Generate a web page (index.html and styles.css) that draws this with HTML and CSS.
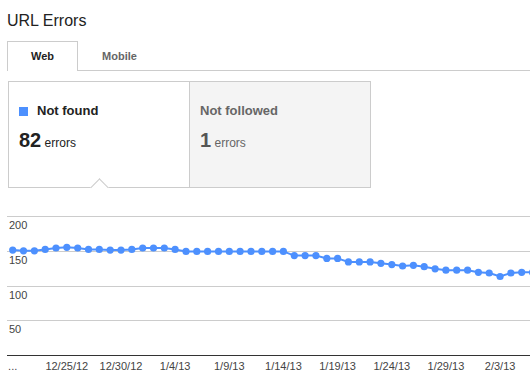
FILE: index.html
```html
<!DOCTYPE html>
<html>
	<head>
		<title>URL Errors</title>
		<link rel="stylesheet" href="styles.css">
	</head>
	<body>
		<div class="page">
			<h1 class="title">URL Errors</h1>

			<div class="tabs">
				<div class="tab active">Web</div>
				<div class="tab">Mobile</div>
			</div>

			<div class="cards">
				<div class="card selected">
					<div class="card-label"><span class="swatch"></span>Not found</div>
					<div class="card-count"><span class="num">82</span> errors</div>
				</div>
				<div class="card off">
					<div class="card-label">Not followed</div>
					<div class="card-count"><span class="num">1</span> errors</div>
				</div>
			</div>

			<svg class="chart" id="chart" width="523" height="177" viewBox="7 200 523 177">
				<g class="grid">
					<line x1="7" y1="216.5" x2="530" y2="216.5"></line>
					<line x1="7" y1="251.5" x2="530" y2="251.5"></line>
					<line x1="7" y1="286.5" x2="530" y2="286.5"></line>
					<line x1="7" y1="320.5" x2="530" y2="320.5"></line>
				</g>
				<line class="axis" x1="7" y1="355.5" x2="530" y2="355.5"></line>
				<g class="ylabels">
					<text x="9" y="229">200</text>
					<text x="9" y="264">150</text>
					<text x="9" y="299">100</text>
					<text x="9" y="333">50</text>
				</g>
				<g class="xlabels" id="xlabels"></g>
				<polyline class="series" id="series" points=""></polyline>
				<g class="dots" id="dots"></g>
			</svg>
		</div>

	<script>
		const values = [151, 150, 150, 152, 154, 155, 154, 152, 152, 151, 151, 152, 154, 154, 154, 152,
			149, 149, 149, 149, 149, 149, 149, 149, 149, 149,
			143, 143, 143, 139, 139, 134, 134, 134, 132, 130, 128, 129, 127, 124,
			122, 122, 122, 119, 118, 113, 118, 119, 119];
		const labels = ["...", "12/25/12", "12/30/12", "1/4/13", "1/9/13", "1/14/13", "1/19/13", "1/24/13", "1/29/13", "2/3/13"];

		const svgNS = "http://www.w3.org/2000/svg";
		const startX = 12.7;
		const step = 10.83;
		const baseY = 355;
		const scale = 0.695;

		function px(i) {
			return startX + i * step;
		}
		function py(v) {
			return baseY - v * scale;
		}

		const dots = document.getElementById("dots");
		let points = [];
		values.forEach(function(v, i) {
			points.push(px(i).toFixed(1) + "," + py(v).toFixed(1));
			const c = document.createElementNS(svgNS, "circle");
			c.setAttribute("cx", px(i).toFixed(1));
			c.setAttribute("cy", py(v).toFixed(1));
			c.setAttribute("r", "3.6");
			dots.appendChild(c);
		});
		document.getElementById("series").setAttribute("points", points.join(" "));

		const xlabels = document.getElementById("xlabels");
		labels.forEach(function(text, i) {
			const t = document.createElementNS(svgNS, "text");
			t.setAttribute("x", px(i * 5).toFixed(1));
			t.setAttribute("y", "370");
			t.textContent = text;
			xlabels.appendChild(t);
		});
	</script>
	</body>
</html>
```

FILE: styles.css
```css
body {
	margin: 0;
	background-color: white;
	font-family: "Liberation Sans", Arial, sans-serif;
	color: #222;
}

.page {
	padding-left: 7px;
	width: 523px;
	overflow: hidden;
}

.title {
	margin: 11px 0 0 0;
	font-size: 16px;
	font-weight: normal;
	line-height: 20px;
	color: #222;
}

.tabs {
	display: flex;
	margin-top: 10px;
	height: 29px;
	border-bottom: 1px solid #ccc;
}

.tab {
	height: 29px;
	line-height: 29px;
	padding: 0 23px;
	font-size: 11px;
	font-weight: bold;
	color: #666;
	border: 1px solid transparent;
	border-bottom: none;
}

.tab.active {
	color: #222;
	background-color: white;
	border-color: #ccc;
	margin-bottom: -1px;
}

.cards {
	display: flex;
	margin: 10px 0 0 1px;
	width: 361px;
	height: 105px;
	border: 1px solid #ccc;
}

.card {
	position: relative;
	width: 160px;
	padding: 21px 10px 0 10px;
}

.card.selected {
	border-right: 1px solid #ccc;
	background-color: white;
}

.card.selected::after {
	content: "";
	position: absolute;
	left: 84px;
	bottom: -7px;
	width: 12px;
	height: 12px;
	background-color: white;
	border-top: 1px solid #ccc;
	border-left: 1px solid #ccc;
	transform: rotate(45deg);
}

.card.off {
	background-color: #f4f4f4;
	color: #666;
}

.card-label {
	font-size: 13px;
	font-weight: bold;
	line-height: 16px;
	display: flex;
	align-items: center;
}

.swatch {
	display: inline-block;
	width: 9px;
	height: 9px;
	background-color: #4d90fe;
	margin-right: 9px;
}

.card-count {
	margin-top: 9px;
	font-size: 12px;
	line-height: 24px;
}

.card-count .num {
	font-size: 20px;
	font-weight: bold;
}

.card.off .num {
	color: #555;
}

.chart {
	display: block;
	margin-top: 12px;
}

.grid line {
	stroke: #ccc;
	stroke-width: 1;
}

.axis {
	stroke: #333;
	stroke-width: 1;
}

.ylabels text,
.xlabels text {
	font-family: "Liberation Sans", Arial, sans-serif;
	font-size: 11px;
	fill: #444;
}

.xlabels text {
	text-anchor: middle;
}

.series {
	fill: none;
	stroke: #4d90fe;
	stroke-width: 2;
}

.dots circle {
	fill: #4d90fe;
}
```
